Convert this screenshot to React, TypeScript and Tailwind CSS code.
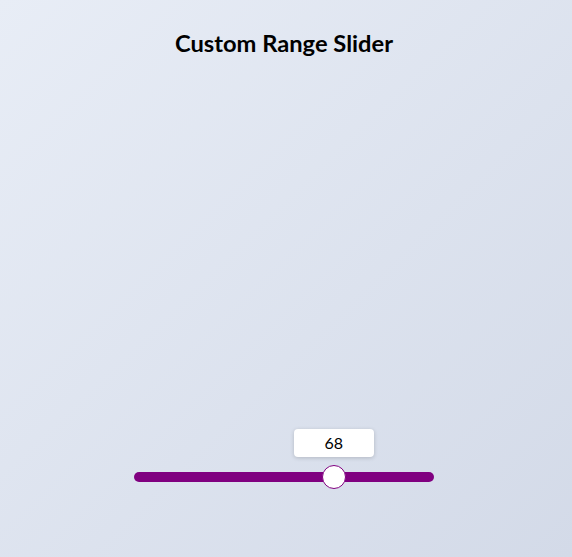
import React, { useState } from "react";

const THUMB = 24;
const TRACK_WIDTH = 300;

export default function App() {
  const [value, setValue] = useState(68);
  const thumbCenter = THUMB / 2 + (value / 100) * (TRACK_WIDTH - THUMB);

  return (
    <div className="min-h-screen w-full bg-gradient-to-br from-[#e8edf6] to-[#d3dae8] pr-[4px] font-['Lato','Liberation_Sans',sans-serif] text-black">
      <h1 className="pt-[27px] text-center text-[23.7px] leading-8 font-bold">
        Custom Range Slider
      </h1>
      <div className="relative mx-auto mt-[413px] w-[300px]">
        <div
          className="absolute top-[-43px] flex h-[28px] w-[80px] items-center justify-center rounded bg-white text-[16px] shadow-[0_1px_4px_rgba(0,0,0,0.18)]"
          style={{ left: thumbCenter - 40 }}
        >
          {value}
        </div>
        <input
          type="range"
          min={0}
          max={100}
          value={value}
          onChange={(e) => setValue(Number(e.target.value))}
          className="block h-[10px] w-full cursor-pointer appearance-none rounded-full bg-[#800080] outline-none [&::-webkit-slider-thumb]:h-6 [&::-webkit-slider-thumb]:w-6 [&::-webkit-slider-thumb]:appearance-none [&::-webkit-slider-thumb]:rounded-full [&::-webkit-slider-thumb]:border [&::-webkit-slider-thumb]:border-[#800080] [&::-webkit-slider-thumb]:bg-white"
        />
      </div>
    </div>
  );
}
